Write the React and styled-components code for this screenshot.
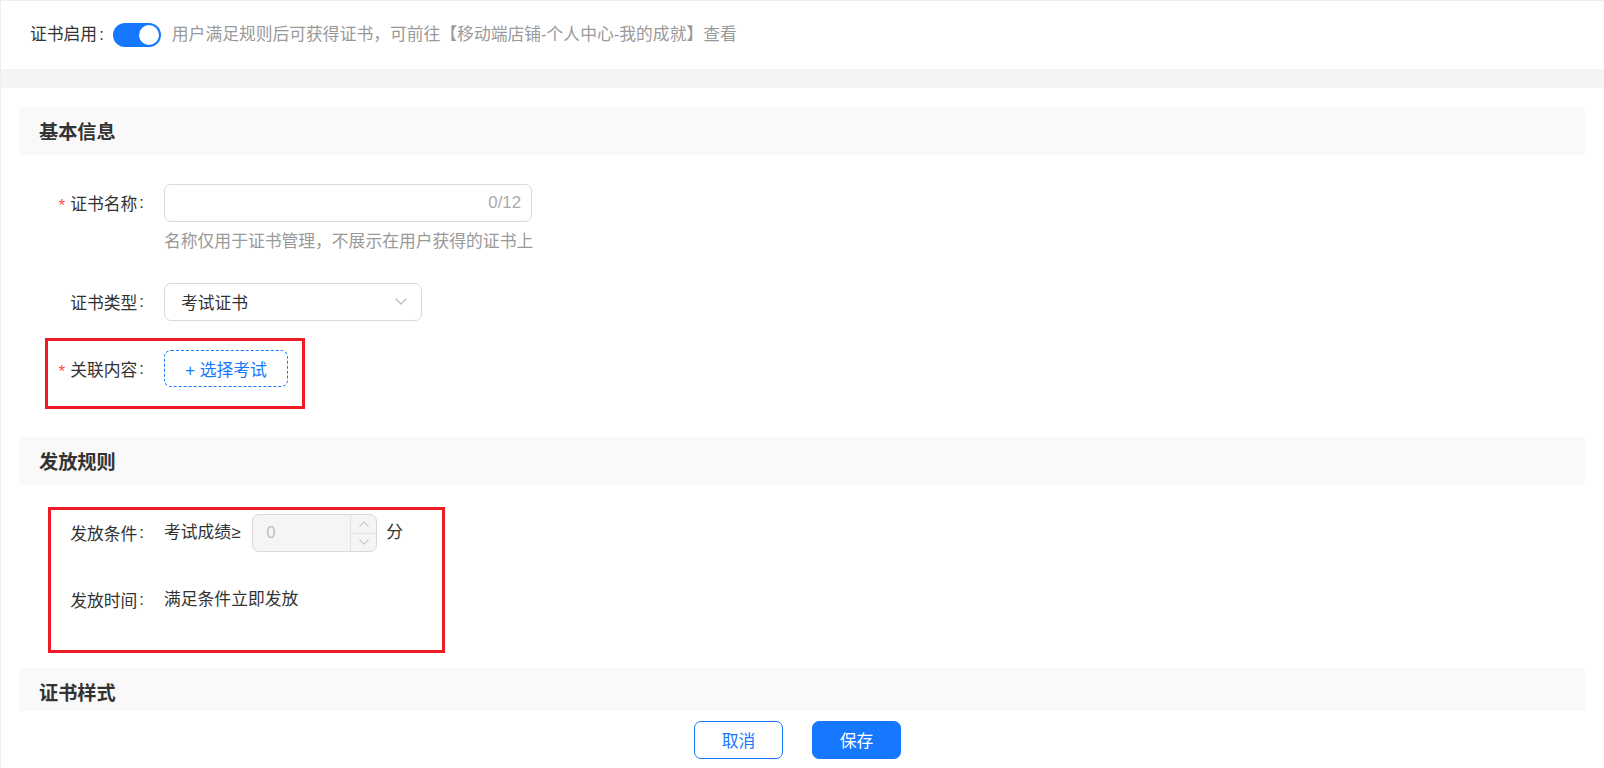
import React from 'react';
import styled, { createGlobalStyle } from 'styled-components';

const GlobalStyle = createGlobalStyle`
  html, body { margin: 0; padding: 0; background: #fff; }
  body {
    font-family: "Liberation Sans", "Noto Sans CJK SC", sans-serif;
    font-size: 16.8px;
    color: #333;
  }
  * { box-sizing: border-box; }
`;

const Page = styled.div`
  height: 100vh;
  display: flex;
  flex-direction: column;
  border-top: 1px solid #eeeeee;
  border-left: 1px solid #eeeeee;
  overflow: hidden;
`;

const Main = styled.div`
  flex: 1;
  min-height: 0;
  overflow: hidden;
`;

const TopBar = styled.div`
  height: 68px;
  display: flex;
  align-items: center;
  padding-left: 29px;
  background: #fff;
`;

const TopLabel = styled.span`
  display: inline-flex;
  align-items: center;
  color: #333;
  line-height: 24px;
`;

const Colon = styled.span`
  margin: 0 8px 0 2px;
`;

const Toggle = styled.span`
  position: relative;
  display: inline-block;
  width: 48px;
  height: 24px;
  border-radius: 12px;
  background: #1677ff;
  margin-left: 1px;
  flex-shrink: 0;
  &::after {
    content: "";
    position: absolute;
    top: 2px;
    right: 2px;
    width: 20px;
    height: 20px;
    border-radius: 50%;
    background: #fff;
  }
`;

const TopHint = styled.span`
  margin-left: 11px;
  color: #999;
  line-height: 24px;
`;

const Band = styled.div`
  height: 19px;
  background: #f4f4f4;
`;

const Card = styled.div`
  background: #fff;
  padding: 19px 19px 0 18px;
  display: flex;
  flex-direction: column;
`;

const Section = styled.section`
  display: flex;
  flex-direction: column;
  & + & { margin-top: 20px; }
`;

const SectionHeader = styled.div`
  height: 48px;
  flex-shrink: 0;
  background: #f9f9f9;
  padding-left: 20px;
  display: flex;
  align-items: center;
  font-size: 19.2px;
  font-weight: 700;
  color: #333;
  margin-bottom: 29px;
`;

const Group = styled.div`
  position: relative;
  display: flex;
  flex-direction: column;
`;

const Highlight = styled.div`
  position: absolute;
  left: ${p => p.$left}px;
  top: ${p => p.$top}px;
  width: ${p => p.$w}px;
  height: ${p => p.$h}px;
  border: 3px solid #ec1c24;
  pointer-events: none;
`;

const FormItem = styled.div`
  display: flex;
  align-items: flex-start;
  margin-bottom: 29px;
`;

const Label = styled.div`
  width: 133px;
  height: 38px;
  margin-right: 12px;
  flex-shrink: 0;
  display: flex;
  align-items: center;
  justify-content: flex-end;
  color: #333;
  white-space: nowrap;
`;

const Required = styled.span`
  color: #ff4d4f;
  margin-right: 5px;
  font-size: 17px;
  line-height: 1;
  position: relative;
  top: 2px;
`;

const Control = styled.div`
  display: flex;
  flex-direction: column;
`;

const InlineControl = styled.div`
  display: flex;
  align-items: center;
  height: 38px;
  line-height: 38px;
  color: #333;
`;

const TextInput = styled.div`
  width: 368px;
  height: 38px;
  border: 1px solid #d9d9d9;
  border-radius: 7px;
  display: flex;
  align-items: center;
  justify-content: flex-end;
  padding: 0 10px;
`;

const Count = styled.span`
  color: #aaa;
`;

const Hint = styled.div`
  margin-top: 8px;
  line-height: 24px;
  color: #999;
`;

const Select = styled.div`
  width: 258px;
  height: 38px;
  border: 1px solid #d9d9d9;
  border-radius: 7px;
  display: flex;
  align-items: center;
  justify-content: space-between;
  padding: 0 14px 0 16px;
  color: #333;
`;

const DashedButton = styled.button`
  width: 124px;
  height: 37px;
  border: 1px dashed #1677ff;
  border-radius: 7px;
  background: #fff;
  color: #1677ff;
  font: inherit;
  display: flex;
  align-items: center;
  justify-content: center;
  padding: 0;
`;

const NumberInput = styled.div`
  width: 125px;
  height: 38px;
  margin: 0 9px 0 12px;
  border: 1px solid #d9d9d9;
  border-radius: 7px;
  background: #f5f5f5;
  display: flex;
  overflow: hidden;
`;

const NumberValue = styled.span`
  flex: 1;
  padding-left: 13px;
  color: #bfbfbf;
  line-height: 36px;
`;

const Handlers = styled.div`
  width: 26px;
  border-left: 1px solid #e3e3e3;
  display: flex;
  flex-direction: column;
`;

const Handler = styled.div`
  flex: 1;
  display: flex;
  align-items: center;
  justify-content: center;
  & + & { border-top: 1px solid #e3e3e3; }
`;

const Footer = styled.div`
  height: 57px;
  flex-shrink: 0;
  background: #fff;
  display: flex;
  align-items: center;
  justify-content: center;
  gap: 29px;
  padding-right: 10px;
`;

const Button = styled.button`
  width: 89px;
  height: 38px;
  border-radius: 7px;
  font: inherit;
  border: 1px solid #1677ff;
  background: ${p => (p.$primary ? '#1677ff' : '#fff')};
  color: ${p => (p.$primary ? '#fff' : '#1677ff')};
  padding: 0;
`;

const Chevron = ({ up, size = 12, color = '#bfbfbf' }) => (
  <svg width={size} height={size * 0.6} viewBox="0 0 12 7" fill="none">
    <path
      d={up ? 'M1 6 L6 1 L11 6' : 'M1 1 L6 6 L11 1'}
      stroke={color}
      strokeWidth="1.4"
      strokeLinecap="round"
      strokeLinejoin="round"
    />
  </svg>
);

export default function App() {
  return (
    <>
      <GlobalStyle />
      <Page>
        <Main>
          <TopBar>
            <TopLabel>证书启用<Colon>:</Colon></TopLabel>
            <Toggle />
            <TopHint>用户满足规则后可获得证书，可前往【移动端店铺-个人中心-我的成就】查看</TopHint>
          </TopBar>
          <Band />
          <Card>
            <Section>
              <SectionHeader>基本信息</SectionHeader>
              <FormItem>
                <Label><Required>*</Required>证书名称<Colon>:</Colon></Label>
                <Control>
                  <TextInput><Count>0/12</Count></TextInput>
                  <Hint>名称仅用于证书管理，不展示在用户获得的证书上</Hint>
                </Control>
              </FormItem>
              <FormItem>
                <Label>证书类型<Colon>:</Colon></Label>
                <Control>
                  <Select>
                    <span>考试证书</span>
                    <Chevron />
                  </Select>
                </Control>
              </FormItem>
              <Group>
                <FormItem>
                  <Label><Required>*</Required>关联内容<Colon>:</Colon></Label>
                  <Control>
                    <DashedButton>+ 选择考试</DashedButton>
                  </Control>
                </FormItem>
                <Highlight $left={26} $top={-12} $w={260} $h={71} />
              </Group>
            </Section>
            <Section>
              <SectionHeader>发放规则</SectionHeader>
              <Group>
                <FormItem>
                  <Label>发放条件<Colon>:</Colon></Label>
                  <InlineControl>
                    考试成绩≥
                    <NumberInput>
                      <NumberValue>0</NumberValue>
                      <Handlers>
                        <Handler><Chevron up size={10} color="#c8c8c8" /></Handler>
                        <Handler><Chevron size={10} color="#c8c8c8" /></Handler>
                      </Handlers>
                    </NumberInput>
                    分
                  </InlineControl>
                </FormItem>
                <FormItem>
                  <Label>发放时间<Colon>:</Colon></Label>
                  <InlineControl>满足条件立即发放</InlineControl>
                </FormItem>
                <Highlight $left={29} $top={-7} $w={397} $h={146} />
              </Group>
            </Section>
            <Section>
              <SectionHeader>证书样式</SectionHeader>
            </Section>
          </Card>
        </Main>
        <Footer>
          <Button>取消</Button>
          <Button $primary>保存</Button>
        </Footer>
      </Page>
    </>
  );
}
